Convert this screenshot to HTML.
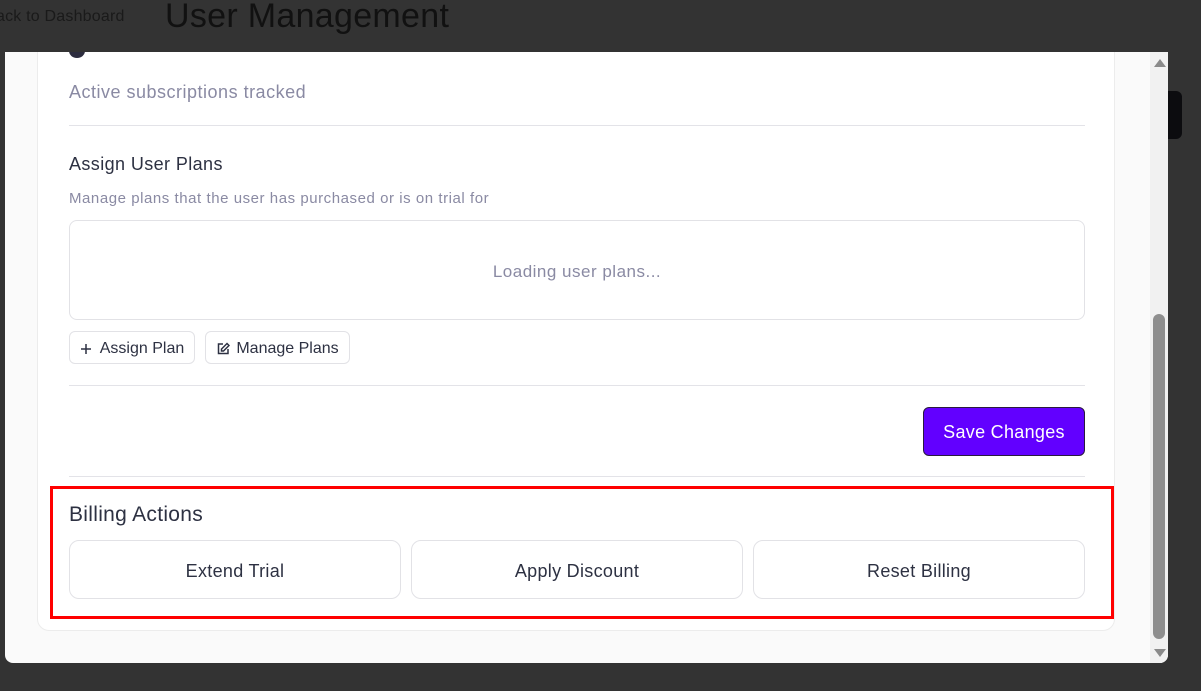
<!DOCTYPE html>
<html><head><meta charset="utf-8"><style>
*{box-sizing:border-box;margin:0;padding:0}
body{width:1201px;height:691px;background:#333333;font-family:"Liberation Sans",sans-serif;position:relative;overflow:hidden;color:#2d3142}
.back{position:absolute;left:-4px;top:8px;font-size:16px;color:#1a1a1a;letter-spacing:0.2px}
.title{position:absolute;left:165px;top:-3px;font-size:34px;color:#111;letter-spacing:0.3px}
.blk{position:absolute;left:1168px;top:91px;width:14px;height:48px;background:#0c0c0f;border-radius:0 6px 6px 0}
.modal{position:absolute;left:5px;top:52px;width:1163px;height:611px;background:#fafafa;border-radius:0 0 8px 8px;overflow:hidden}
.card{position:absolute;left:32px;top:-20px;width:1078px;height:599px;background:#fff;border:1px solid #ececec;border-radius:12px}
.dot{position:absolute;left:64px;top:-8px;width:16px;height:14px;background:#2d2d3f;border-radius:50%}
.t{position:absolute;white-space:nowrap}
.hr{position:absolute;left:64px;width:1016px;height:1px;background:#e3e3e8}
.btn{position:absolute;border:1px solid #e2e2e6;border-radius:6px;background:#fff;font-size:16px;color:#2d3142;display:flex;align-items:center;justify-content:center}
.big{position:absolute;top:488px;width:332px;height:59px;border:1px solid #e2e2e6;border-radius:10px;background:#fff;font-size:18px;display:flex;align-items:center;justify-content:center;color:#2d3142;padding-top:3px;letter-spacing:0.3px}
.sb{position:absolute;left:1145px;top:0;width:18px;height:611px;background:#f1f1f1}
</style></head><body>
<div class="back">ack to Dashboard</div>
<div class="title">User Management</div>
<div class="blk"></div>
<div class="modal">
  <div class="card"></div>
  <div class="dot"></div>
  <div class="t" style="left:64px;top:30px;font-size:18px;color:#8a8aa3;letter-spacing:0.5px">Active subscriptions tracked</div>
  <div class="hr" style="top:73px"></div>
  <div class="t" style="left:64px;top:102px;font-size:18px;color:#2d3142;letter-spacing:0.4px">Assign User Plans</div>
  <div class="t" style="left:64px;top:138px;font-size:15px;color:#8a8aa3;letter-spacing:0.55px">Manage plans that the user has purchased or is on trial for</div>
  <div style="position:absolute;left:64px;top:168px;width:1016px;height:100px;border:1px solid #e2e2e6;border-radius:8px;display:flex;align-items:center;justify-content:center;font-size:17px;color:#8a8aa3;letter-spacing:0.5px;padding-top:3px">Loading user plans...</div>
  <div class="btn" style="left:64px;top:279px;width:126px;height:33px;padding-top:2px">
    <svg width="12" height="12" viewBox="0 0 12 12" style="margin-right:8px"><path d="M6 1v10M1 6h10" stroke="#2d3142" stroke-width="1.5"/></svg>Assign Plan</div>
  <div class="btn" style="left:200px;top:279px;width:145px;height:33px;padding-top:2px">
    <svg width="14" height="14" viewBox="0 0 14 14" style="margin-right:6px"><path d="M7 2H2.5v9.5H12V7" fill="none" stroke="#2d3142" stroke-width="1.5"/><path d="M11 1.5l2 2L7.5 9H5.5V7z" fill="none" stroke="#2d3142" stroke-width="1.5"/></svg>Manage Plans</div>
  <div class="hr" style="top:333px"></div>
  <div style="position:absolute;left:918px;top:355px;width:162px;height:49px;background:#6200ff;border:1px solid #2a1a40;border-radius:6px;color:#fff;font-size:18px;display:flex;align-items:center;justify-content:center;padding-top:2px;letter-spacing:0.3px">Save Changes</div>
  <div class="hr" style="top:424px"></div>
  <div style="position:absolute;left:45px;top:434px;width:1064px;height:133px;border:3px solid #ff0000"></div>
  <div class="t" style="left:64px;top:451px;font-size:21px;color:#2d3142;letter-spacing:0.3px">Billing Actions</div>
  <div class="big" style="left:64px">Extend Trial</div>
  <div class="big" style="left:406px">Apply Discount</div>
  <div class="big" style="left:748px">Reset Billing</div>
  <div class="sb">
    <div style="position:absolute;left:4px;top:7px;width:0;height:0;border-left:6px solid transparent;border-right:6px solid transparent;border-bottom:8px solid #8a8a8a"></div>
    <div style="position:absolute;left:3px;top:262px;width:12px;height:325px;background:#8e8e8e;border-radius:6px"></div>
    <div style="position:absolute;left:4px;top:597px;width:0;height:0;border-left:6px solid transparent;border-right:6px solid transparent;border-top:8px solid #8a8a8a"></div>
  </div>
</div>
</body></html>
